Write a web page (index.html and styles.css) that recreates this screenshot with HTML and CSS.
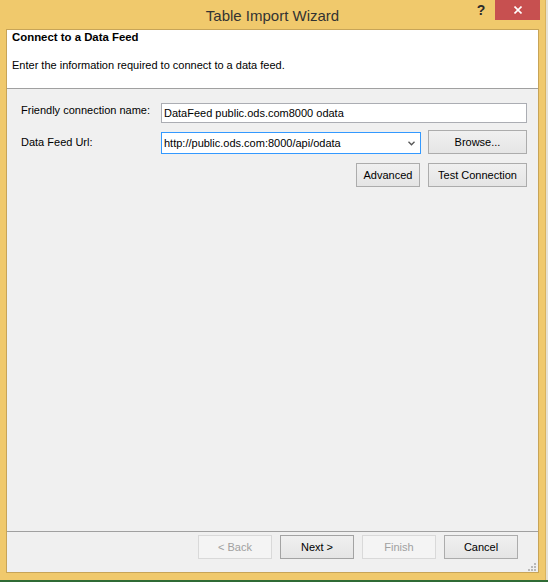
FILE: index.html
```html
<!DOCTYPE html>
<html>
<head>
<meta charset="utf-8">
<title>Table Import Wizard</title>
<link rel="stylesheet" href="styles.css">
</head>
<body>
<div class="window">
  <div class="titlebar">
    <div class="title-spacer"></div>
    <div class="title">Table Import Wizard</div>
    <div class="caption-buttons">
      <span class="help">?</span>
      <span class="close"><svg width="8" height="8" viewBox="0 0 8 8"><path d="M0.5 0.5 L7.5 7.5 M7.5 0.5 L0.5 7.5" stroke="#fff" stroke-width="1.6" fill="none"/></svg></span>
    </div>
  </div>
  <div class="client">
    <div class="header">
      <div class="header-title">Connect to a Data Feed</div>
      <div class="header-desc">Enter the information required to connect to a data feed.</div>
    </div>
    <div class="form">
      <div class="row row-name">
        <label class="label label-name">Friendly connection name:</label>
        <div class="textbox">DataFeed public.ods.com8000 odata</div>
      </div>
      <div class="row row-url">
        <label class="label label-url">Data Feed Url:</label>
        <div class="combo">
          <span class="combo-text">http://public.ods.com:8000/api/odata</span>
          <svg class="combo-arrow" width="7" height="5" viewBox="0 0 7 5"><path d="M0.5 0.8 L3.5 3.8 L6.5 0.8" stroke="#555" stroke-width="1.3" fill="none"/></svg>
        </div>
        <button class="btn btn-side">Browse...</button>
      </div>
      <div class="row row-actions">
        <button class="btn btn-advanced">Advanced</button>
        <button class="btn btn-side">Test Connection</button>
      </div>
    </div>
    <div class="footer">
      <button class="btn btn-nav" disabled>&lt; Back</button>
      <button class="btn btn-nav btn-default">Next &gt;</button>
      <button class="btn btn-nav" disabled>Finish</button>
      <button class="btn btn-nav">Cancel</button>
    </div>
    <svg class="grip" width="8" height="8" viewBox="0 0 8 8">
      <rect x="6" y="0" width="2" height="2" fill="#b8b8b8"/>
      <rect x="3" y="3" width="2" height="2" fill="#b8b8b8"/>
      <rect x="6" y="3" width="2" height="2" fill="#b8b8b8"/>
      <rect x="0" y="6" width="2" height="2" fill="#b8b8b8"/>
      <rect x="3" y="6" width="2" height="2" fill="#b8b8b8"/>
      <rect x="6" y="6" width="2" height="2" fill="#b8b8b8"/>
    </svg>
  </div>
</div>
</body>
</html>
```

FILE: styles.css
```css
html, body {
  margin: 0;
  padding: 0;
}

body {
  width: 548px;
  height: 582px;
  background: linear-gradient(to bottom, #e6e1d2 0, #e6e1d2 580px, #2f6b35 580px);
  font-family: "Liberation Sans", Arial, sans-serif;
  font-size: 11px;
  color: #000;
  overflow: hidden;
}

.window {
  width: 546px;
  height: 580px;
  background: #f0c96c;
  box-sizing: border-box;
  border-right: 1px solid #d9b35e;
  display: flex;
  flex-direction: column;
}

.titlebar {
  height: 29px;
  flex: none;
  display: grid;
  grid-template-columns: 1fr auto 1fr;
}

.title {
  font-size: 15px;
  line-height: 18px;
  padding-top: 7px;
  color: #333;
  white-space: nowrap;
}

.caption-buttons {
  display: flex;
  justify-content: flex-end;
  align-items: flex-start;
  padding-right: 5px;
}

.help {
  width: 28px;
  height: 20px;
  font-size: 14px;
  font-weight: bold;
  line-height: 20px;
  text-align: center;
  color: #2b2b2b;
}

.close {
  width: 45px;
  height: 20px;
  background: #c75050;
  display: flex;
  align-items: center;
  justify-content: center;
}

.client {
  position: relative;
  margin: 0 6px;
  height: 544px;
  box-sizing: border-box;
  border: 1px solid #c7a458;
  background: #f0f0f0;
  display: flex;
  flex-direction: column;
}

.header {
  flex: none;
  height: 58px;
  box-sizing: content-box;
  background: #fff;
  border-bottom: 1px solid #a0a0a0;
  padding: 0 5px;
}

.header-title {
  font-weight: bold;
  font-size: 11.4px;
  line-height: 13px;
  padding-top: 1px;
}

.header-desc {
  line-height: 13px;
  margin-top: 15px;
}

.form {
  flex: 1;
  padding: 14px 11px 0 14px;
}

.row {
  display: flex;
  align-items: flex-start;
}

.label {
  width: 140px;
  flex: none;
  line-height: 13px;
  white-space: nowrap;
}

.label-name {
  margin-top: 1px;
}

.label-url {
  margin-top: 6px;
}

.textbox {
  flex: 1;
  height: 20px;
  box-sizing: border-box;
  border: 1px solid #abadb3;
  background: #fff;
  padding: 0 2px;
  line-height: 18px;
  white-space: nowrap;
}

.row-url {
  margin-top: 7px;
}

.combo {
  width: 260px;
  height: 22px;
  margin-top: 2px;
  box-sizing: border-box;
  border: 1px solid #3399ff;
  background: #fff;
  padding: 0 5px 0 2px;
  line-height: 20px;
  display: flex;
  align-items: center;
  justify-content: space-between;
}

.combo-text {
  white-space: nowrap;
}

.btn {
  font-family: "Liberation Sans", Arial, sans-serif;
  font-size: 11px;
  color: #000;
  height: 24px;
  box-sizing: border-box;
  border: 1px solid #acacac;
  background: linear-gradient(to bottom, #f0f0f0, #e5e5e5);
  padding: 0;
  margin: 0;
  line-height: 22px;
  text-align: center;
  white-space: nowrap;
}

.btn:disabled {
  border-color: #d9d9d9;
  background: #f4f4f4;
  color: #a0a0a0;
}

.btn-side {
  width: 99px;
  margin-left: 7px;
}

.row-actions {
  margin-top: 9px;
  justify-content: flex-end;
}

.btn-advanced {
  width: 64px;
}

.row-actions .btn-side {
  margin-left: 8px;
}

.footer {
  flex: none;
  border-top: 1px solid #a0a0a0;
  padding: 3px 20px 13px 0;
  display: flex;
  justify-content: flex-end;
  gap: 8px;
}

.btn-nav {
  width: 74px;
}

.btn-default {
  border-color: #a3a3a3;
}

.grip {
  position: absolute;
  right: 2px;
  bottom: 1px;
}
```
